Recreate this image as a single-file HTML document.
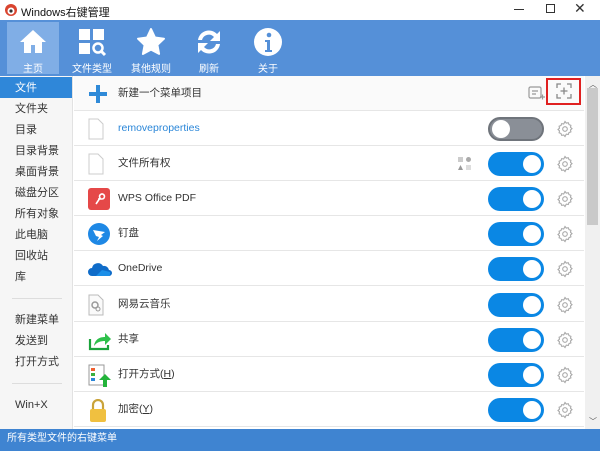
<!DOCTYPE html>
<html><head><meta charset="utf-8"><style>
*{margin:0;padding:0;box-sizing:border-box}
body{width:600px;height:451px;overflow:hidden;position:relative;background:#fff;font-family:"Liberation Sans","Noto Sans CJK SC",sans-serif;font-size:11px;color:#333}
.abs{position:absolute}
.title{left:0;top:0;width:600px;height:20px;background:#fff}
.tb{left:0;top:20px;width:600px;height:56px;background:#5590d8}
.btn{position:absolute;top:2px;width:52px;height:52px;color:#fff;text-align:center;font-size:10px}
.btn svg{position:absolute;left:10px;top:4px}
.btn span{position:absolute;left:0;right:0;top:38px}
.side{left:0;top:76px;width:73px;height:353px;background:#f6f6f6;border-right:1px solid #e2e2e2}
.si{position:absolute;left:0;width:72px;height:21px;line-height:22px;padding-left:15px;font-size:11px;color:#333}
.si.sel{background:#2f87d9;color:#fff}
.sep{position:absolute;left:12px;width:50px;height:1px;background:#ddd}
.row{position:absolute;left:74px;width:510px;height:35px;background:#fff;border-bottom:1px solid #e6e6e6}
.row .t{position:absolute;left:44px;top:0;line-height:35px;font-size:10.5px}
.row .ic{position:absolute;left:14px;top:7px}
.tg{position:absolute;left:414px;top:6px;width:56px;height:24px;border-radius:12px;background:#0a87e4}
.tg::after{content:"";position:absolute;right:3px;top:3px;width:18px;height:18px;border-radius:50%;background:#fff}
.tg.off{background:#8a8f97;border:2px solid #6f747b}
.tg.off::after{left:2px;right:auto;top:1px}
.status{left:0;top:429px;width:600px;height:22px;background:#3f84d1;color:#fff;font-size:10px;line-height:20px;padding-left:7px}
.sb{left:585px;top:76px;width:15px;height:353px;background:#f0f0f0}
</style></head><body>
<div class="abs title">
 <svg class="abs" style="left:4px;top:3px" width="14" height="14"><circle cx="7" cy="7" r="6" fill="#d9442f"/><circle cx="7" cy="8" r="3.5" fill="#fff"/><circle cx="7" cy="8" r="1.6" fill="#333"/></svg>
 <div class="abs" style="left:21px;top:4px;font-size:11px;color:#111">Windows右键管理</div>
 <div class="abs" style="left:514px;top:9px;width:10px;height:1px;background:#333"></div>
 <div class="abs" style="left:546px;top:4px;width:9px;height:9px;border:1px solid #333"></div>
 <div class="abs" style="left:574px;top:0px;font-size:14px;color:#333">✕</div>
</div>
<div class="abs tb">
 <div class="btn" style="left:7px;background:#80aee6"><svg width="32" height="32" viewBox="0 0 32 32"><path d="M16 4L3 16h4v11h7v-8h4v8h7V16h4z" fill="#fff"/></svg><span>主页</span></div>
 <div class="btn" style="left:66px"><svg width="32" height="32" viewBox="0 0 32 32"><rect x="3" y="3" width="11" height="11" fill="#fff"/><rect x="17" y="3" width="11" height="11" fill="#fff"/><rect x="3" y="17" width="11" height="11" fill="#fff"/><circle cx="22" cy="22" r="4.5" stroke="#fff" stroke-width="2.5" fill="none"/><path d="M25 25l4 4" stroke="#fff" stroke-width="3"/></svg><span>文件类型</span></div>
 <div class="btn" style="left:125px"><svg width="32" height="32" viewBox="0 0 32 32"><path d="M16 3l4 8.5 9 1.2-6.6 6.2 1.7 9L16 23.6 7.9 28l1.7-9L3 12.7l9-1.2z" fill="#fff" stroke="#fff" stroke-width="2" stroke-linejoin="round"/></svg><span>其他规则</span></div>
 <div class="btn" style="left:183px"><svg width="32" height="32" viewBox="0 0 32 32"><path d="M5 14A11 11 0 0 1 24 8l3-3v10h-10l4-4A7 7 0 0 0 9 14z" fill="#fff"/><path d="M27 18A11 11 0 0 1 8 24l-3 3V17h10l-4 4a7 7 0 0 0 12-3z" fill="#fff"/></svg><span>刷新</span></div>
 <div class="btn" style="left:242px"><svg width="32" height="32" viewBox="0 0 32 32"><circle cx="16" cy="16" r="14" fill="#fff"/><circle cx="17" cy="9" r="2.3" fill="#5590d8"/><path d="M13 14h5v10h2v2h-7v-2h2v-8h-2z" fill="#5590d8"/></svg><span>关于</span></div>
</div>
<div class="abs side">
 <div class="si sel" style="top:1px">文件</div>
 <div class="si" style="top:22px">文件夹</div>
 <div class="si" style="top:43px">目录</div>
 <div class="si" style="top:64px">目录背景</div>
 <div class="si" style="top:85px">桌面背景</div>
 <div class="si" style="top:106px">磁盘分区</div>
 <div class="si" style="top:127px">所有对象</div>
 <div class="si" style="top:148px">此电脑</div>
 <div class="si" style="top:169px">回收站</div>
 <div class="si" style="top:190px">库</div>
 <div class="sep" style="top:222px"></div>
 <div class="si" style="top:233px">新建菜单</div>
 <div class="si" style="top:254px">发送到</div>
 <div class="si" style="top:275px">打开方式</div>
 <div class="sep" style="top:307px"></div>
 <div class="si" style="top:318px">Win+X</div>
</div>

<div class="row" style="top:76px;background:#fafafa">
 <svg class="ic" style="top:8px" width="20" height="20"><rect x="8" y="1" width="4" height="18" fill="#2f8ad8"/><rect x="1" y="8" width="18" height="4" fill="#2f8ad8"/></svg>
 <div class="t">新建一个菜单项目</div>
 <svg class="abs" style="left:454px;top:9px" width="17" height="16"><rect x="1" y="2" width="12" height="11" rx="1.5" fill="none" stroke="#999" stroke-width="1.2"/><path d="M4 6h6M4 9h4M12 12h5M14.5 9.5v5" stroke="#999" stroke-width="1.2"/></svg>
 <div class="abs" style="left:472px;top:2px;width:35px;height:27px;border:2px solid #e02020"></div>
 <svg class="abs" style="left:482px;top:7px" width="16" height="16"><path d="M1 5V1h4M11 1h4v4M15 11v4h-4M5 15H1v-4" stroke="#888" fill="none" stroke-width="1.3"/><path d="M8 4.5v7M4.5 8h7" stroke="#888" stroke-width="1.3"/></svg>
</div>

<div class="row" style="top:111px">
 <svg class="ic" width="16" height="22"><path d="M1 1h9l5 5v15H1z" fill="#fff" stroke="#ccc"/></svg>
 <div class="t" style="color:#2a86d8">removeproperties</div>
 <div class="tg off"></div>
</div>
<div class="row" style="top:146px">
 <svg class="ic" width="16" height="22"><path d="M1 1h9l5 5v15H1z" fill="#fff" stroke="#ccc"/></svg>
 <div class="t">文件所有权</div>
 <svg class="abs" style="left:384px;top:11px" width="14" height="14"><rect x="0" y="0" width="5" height="5" fill="#ccc"/><circle cx="10.5" cy="2.5" r="2.5" fill="#aaa"/><path d="M2.5 8L5 13H0z" fill="#999"/><rect x="8" y="8" width="5" height="5" fill="#ddd"/></svg>
 <div class="tg"></div>
</div>
<div class="row" style="top:181px">
 <svg class="ic" width="22" height="22"><rect width="22" height="22" rx="3" fill="#e54848"/><path d="M8 16l4-6a2.5 2.5 0 1 1 2 1H10" stroke="#fff" stroke-width="1.6" fill="none"/></svg>
 <div class="t">WPS Office PDF</div>
 <div class="tg"></div>
</div>
<div class="row" style="top:216px">
 <svg class="ic" width="22" height="22"><circle cx="11" cy="11" r="11" fill="#1e88e5"/><path d="M5 7l12 2-4 3 2 1-6 5 2-4-3-1z" fill="#fff"/></svg>
 <div class="t">钉盘</div>
 <div class="tg"></div>
</div>
<div class="row" style="top:251px">
 <svg class="ic" style="top:10px" width="24" height="16"><path d="M4 15a4 4 0 0 1 0-8 6 6 0 0 1 11-2 5 5 0 0 1 6 4 3 3 0 0 1 0 6z" fill="#0f6cc9"/><path d="M8 15l6-6 8 2v1a3 3 0 0 1-1 3z" fill="#1b8fe8"/></svg>
 <div class="t">OneDrive</div>
 <div class="tg"></div>
</div>
<div class="row" style="top:287px">
 <svg class="ic" width="16" height="22"><path d="M1 1h9l5 5v15H1z" fill="#fafafa" stroke="#bbb"/><circle cx="7" cy="11" r="3" fill="none" stroke="#999" stroke-width="1.5"/><circle cx="10" cy="15" r="2" fill="none" stroke="#999"/></svg>
 <div class="t">网易云音乐</div>
 <div class="tg"></div>
</div>
<div class="row" style="top:322px">
 <svg class="ic" width="24" height="22"><path d="M2 10v10h18v-4" stroke="#1aa33a" stroke-width="2.2" fill="none"/><path d="M6 17c1-7 6-9 11-9V4l6 6-6 6v-4c-4 0-8 1-11 5z" fill="#2ec04b"/></svg>
 <div class="t">共享</div>
 <div class="tg"></div>
</div>
<div class="row" style="top:357px">
 <svg class="ic" width="24" height="24"><rect x="1" y="1" width="15" height="20" fill="#fff" stroke="#999"/><rect x="3" y="4" width="4" height="3" fill="#f06030"/><rect x="3" y="9" width="4" height="3" fill="#3ab040"/><rect x="3" y="14" width="4" height="3" fill="#2a86d8"/><path d="M17 10l6 6h-4v7h-4v-7h-4z" fill="#23b33a"/></svg>
 <div class="t">打开方式(<u>H</u>)</div>
 <div class="tg"></div>
</div>
<div class="row" style="top:392px">
 <svg class="ic" width="20" height="24"><path d="M5 10V6a5 5 0 0 1 10 0v4" stroke="#c9a33a" stroke-width="2.2" fill="none"/><rect x="2" y="10" width="16" height="13" rx="2" fill="#f0c040"/></svg>
 <div class="t">加密(<u>Y</u>)</div>
 <div class="tg"></div>
</div>

<svg width="0" height="0" style="position:absolute"><defs><g id="g"><path d="M8 1.5l1.3 1.6 2-.4.7 1.9 1.9.7-.4 2 1.5 1.3-1.5 1.3.4 2-1.9.7-.7 1.9-2-.4L8 16.5l-1.3-1.5-2 .4-.7-1.9-1.9-.7.4-2L1 9.5l1.5-1.3-.4-2 1.9-.7.7-1.9 2 .4z" fill="none" stroke="#aaa" stroke-width="1.1"/><circle cx="8" cy="9" r="2.3" fill="none" stroke="#aaa" stroke-width="1.1"/></g></defs></svg>
<svg class="abs" style="left:557px;top:120px" width="16" height="18"><use href="#g"/></svg>
<svg class="abs" style="left:557px;top:155px" width="16" height="18"><use href="#g"/></svg>
<svg class="abs" style="left:557px;top:190px" width="16" height="18"><use href="#g"/></svg>
<svg class="abs" style="left:557px;top:225px" width="16" height="18"><use href="#g"/></svg>
<svg class="abs" style="left:557px;top:260px" width="16" height="18"><use href="#g"/></svg>
<svg class="abs" style="left:557px;top:296px" width="16" height="18"><use href="#g"/></svg>
<svg class="abs" style="left:557px;top:331px" width="16" height="18"><use href="#g"/></svg>
<svg class="abs" style="left:557px;top:366px" width="16" height="18"><use href="#g"/></svg>
<svg class="abs" style="left:557px;top:401px" width="16" height="18"><use href="#g"/></svg>

<div class="abs sb">
 <div class="abs" style="left:4px;top:3px;font-size:8px;color:#555">︿</div>
 <div class="abs" style="left:2px;top:12px;width:11px;height:137px;background:#c9c9c9"></div>
 <div class="abs" style="left:4px;top:340px;font-size:8px;color:#555">﹀</div>
</div>
<div class="abs status">所有类型文件的右键菜单</div>
</body></html>
